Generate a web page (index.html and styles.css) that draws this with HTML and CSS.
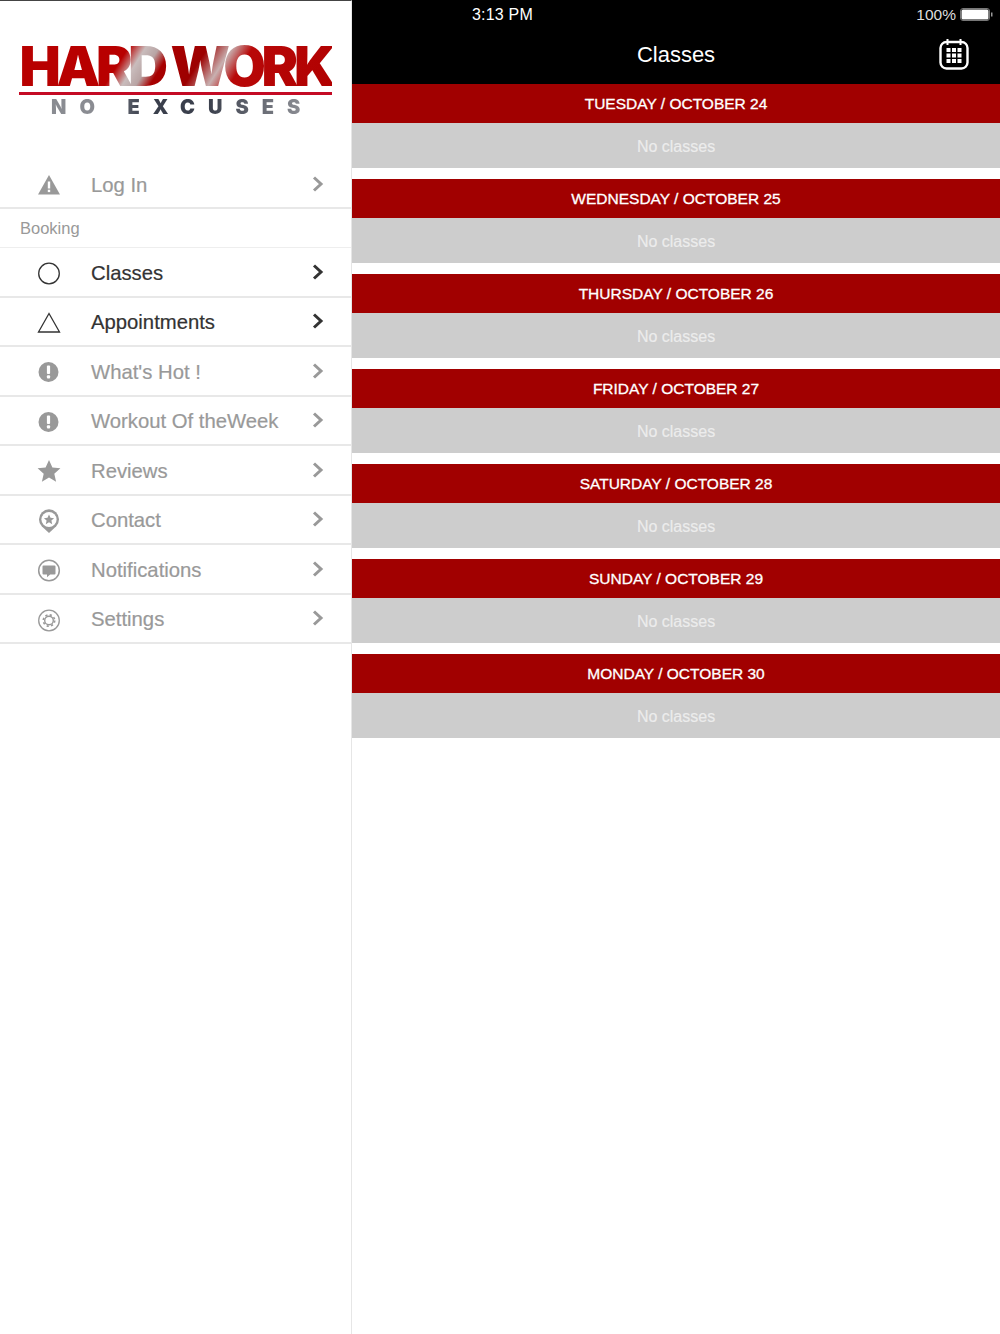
FILE: index.html
```html
<!DOCTYPE html>
<html lang="en">
<head>
  <meta charset="UTF-8">
  <meta name="viewport" content="width=device-width, initial-scale=1.0">
  <title>Classes</title>
  <link rel="stylesheet" href="styles.css">
</head>
<body>
<div class="page">
  <div class="sidebar">
    <div class="logo">
      <div class="logo-title">HARD WORK</div>
      <div class="logo-line"></div>
      <div class="logo-sub">NO EXCUSES</div>
    </div>

    <div class="menu-row login">
      <svg class="menu-icon" viewBox="0 0 24 24"><path d="M12 2 23 21.500H1Z" fill="currentColor"></path><rect x="10.800" y="8.500" width="2.400" height="7" fill="#fff"></rect><rect x="10.800" y="16.700" width="2.400" height="2.400" fill="#fff"></rect></svg>
      <span class="menu-label">Log In</span>
      <svg class="chevron" viewBox="0 0 12 16"><path d="M2 1.500 9 8l-7 6.500" fill="none" stroke="currentColor" stroke-width="3"></path></svg>
    </div>
    <div class="menu-section">Booking</div>
    <div class="menu-row active">
      <svg class="menu-icon" viewBox="0 0 24 24"><circle cx="12" cy="12.500" r="10.300" fill="none" stroke="currentColor" stroke-width="1.300"></circle></svg>
      <span class="menu-label">Classes</span>
      <svg class="chevron" viewBox="0 0 12 16"><path d="M2 1.500 9 8l-7 6.500" fill="none" stroke="currentColor" stroke-width="3"></path></svg>
    </div>
    <div class="menu-row active">
      <svg class="menu-icon" viewBox="0 0 24 24"><path d="M12 2.500 22.500 21H1.500Z" fill="none" stroke="currentColor" stroke-width="1.300"></path></svg>
      <span class="menu-label">Appointments</span>
      <svg class="chevron" viewBox="0 0 12 16"><path d="M2 1.500 9 8l-7 6.500" fill="none" stroke="currentColor" stroke-width="3"></path></svg>
    </div>
    <div class="menu-row">
      <svg class="menu-icon" viewBox="0 0 24 24"><circle cx="11.500" cy="12" r="10" fill="currentColor"></circle><rect x="9.900" y="5.500" width="3.200" height="8.500" rx="1" fill="#fff"></rect><rect x="9.900" y="15.300" width="3.200" height="3.200" rx="1" fill="#fff"></rect></svg>
      <span class="menu-label">What's Hot !</span>
      <svg class="chevron" viewBox="0 0 12 16"><path d="M2 1.500 9 8l-7 6.500" fill="none" stroke="currentColor" stroke-width="3"></path></svg>
    </div>
    <div class="menu-row">
      <svg class="menu-icon" viewBox="0 0 24 24"><circle cx="11.500" cy="12" r="10" fill="currentColor"></circle><rect x="9.900" y="5.500" width="3.200" height="8.500" rx="1" fill="#fff"></rect><rect x="9.900" y="15.300" width="3.200" height="3.200" rx="1" fill="#fff"></rect></svg>
      <span class="menu-label">Workout Of theWeek</span>
      <svg class="chevron" viewBox="0 0 12 16"><path d="M2 1.500 9 8l-7 6.500" fill="none" stroke="currentColor" stroke-width="3"></path></svg>
    </div>
    <div class="menu-row">
      <svg class="menu-icon" viewBox="0 0 24 24"><path d="m12 1 3.400 7.500 8 .8-6.100 5.400 1.800 8-7.100-4.200-7.100 4.200 1.800-8L.6 9.300l8-.8Z" fill="currentColor"></path></svg>
      <span class="menu-label">Reviews</span>
      <svg class="chevron" viewBox="0 0 12 16"><path d="M2 1.500 9 8l-7 6.500" fill="none" stroke="currentColor" stroke-width="3"></path></svg>
    </div>
    <div class="menu-row">
      <svg class="menu-icon" viewBox="0 0 24 24"><path d="M12 24 4.700 17.200a10 10 0 1 1 14.600 0Z" fill="currentColor"></path><circle cx="12" cy="10.500" r="7.600" fill="#fff"></circle><path d="m12 5.500 1.500 3.300 3.600.4-2.700 2.400.8 3.600-3.200-1.900-3.200 1.900.8-3.600-2.700-2.400 3.600-.4Z" fill="currentColor"></path></svg>
      <span class="menu-label">Contact</span>
      <svg class="chevron" viewBox="0 0 12 16"><path d="M2 1.500 9 8l-7 6.500" fill="none" stroke="currentColor" stroke-width="3"></path></svg>
    </div>
    <div class="menu-row">
      <svg class="menu-icon" viewBox="0 0 24 24"><circle cx="12" cy="12.500" r="10.300" fill="none" stroke="currentColor" stroke-width="1.500"></circle><path d="M6.500 7.500h11a1 1 0 0 1 1 1v7a1 1 0 0 1-1 1h-4.300L10 19.300v-2.800H6.500a1 1 0 0 1-1-1v-7a1 1 0 0 1 1-1Z" fill="currentColor"></path></svg>
      <span class="menu-label">Notifications</span>
      <svg class="chevron" viewBox="0 0 12 16"><path d="M2 1.500 9 8l-7 6.500" fill="none" stroke="currentColor" stroke-width="3"></path></svg>
    </div>
    <div class="menu-row">
      <svg class="menu-icon" viewBox="0 0 24 24"><circle cx="12" cy="12.500" r="10.300" fill="none" stroke="currentColor" stroke-width="1.300"></circle><circle cx="12" cy="12.500" r="4.300" fill="none" stroke="currentColor" stroke-width="1.400"></circle><circle cx="12" cy="12.500" r="5.700" fill="none" stroke="currentColor" stroke-width="1.600" stroke-dasharray="2.200 2.280"></circle></svg>
      <span class="menu-label">Settings</span>
      <svg class="chevron" viewBox="0 0 12 16"><path d="M2 1.500 9 8l-7 6.500" fill="none" stroke="currentColor" stroke-width="3"></path></svg>
    </div>
  </div>

  <div class="main">
    <div class="topbar">
      <div class="status">
        <span class="status-time">3:13 PM</span>
        <span class="status-battery">100%
          <svg class="battery" viewBox="0 0 33 13"><rect x=".5" y=".5" width="29" height="12" rx="2.500" fill="none" stroke="#777"></rect><rect x="1.500" y="1.500" width="27" height="10" rx="1.500" fill="#fff"></rect><rect x="31" y="4.500" width="1.500" height="4" fill="#999"></rect></svg>
        </span>
      </div>
      <div class="nav">
        <span class="nav-title">Classes</span>
        <svg class="nav-cal" viewBox="0 0 30 32"><rect x="1.500" y="4" width="27" height="26.500" rx="6" fill="none" stroke="#fff" stroke-width="2.400"></rect><path d="M8.500 1v6M21.500 1v6" stroke="#fff" stroke-width="2"></path><path d="M7.500 10h4v4h-4Zm5.500 0h4v4h-4Zm5.500 0h4v4h-4Zm-11 5.500h4v4h-4Zm5.500 0h4v4h-4Zm5.500 0h4v4h-4ZM7.500 21h4v4h-4Zm5.500 0h4v4h-4Zm5.500 0h4v4h-4Z" fill="#fff"></path></svg>
      </div>
    </div>

    <div class="day">
      <div class="day-head">TUESDAY / OCTOBER 24</div>
      <div class="day-empty">No classes</div>
    </div>
    <div class="day">
      <div class="day-head">WEDNESDAY / OCTOBER 25</div>
      <div class="day-empty">No classes</div>
    </div>
    <div class="day">
      <div class="day-head">THURSDAY / OCTOBER 26</div>
      <div class="day-empty">No classes</div>
    </div>
    <div class="day">
      <div class="day-head">FRIDAY / OCTOBER 27</div>
      <div class="day-empty">No classes</div>
    </div>
    <div class="day">
      <div class="day-head">SATURDAY / OCTOBER 28</div>
      <div class="day-empty">No classes</div>
    </div>
    <div class="day">
      <div class="day-head">SUNDAY / OCTOBER 29</div>
      <div class="day-empty">No classes</div>
    </div>
    <div class="day">
      <div class="day-head">MONDAY / OCTOBER 30</div>
      <div class="day-empty">No classes</div>
    </div>
  </div>
</div>
</body>
</html>
```

FILE: styles.css
```css
:root {
  --red: #a10000;
  --grey: #cdcdcd;
  --muted: #999999;
  --dark: #333333;
  --border: #e8e8e8;
}

* {
  margin: 0;
  padding: 0;
  box-sizing: border-box;
}

html, body {
  height: 100%;
}

body {
  font-family: "Liberation Sans", Arial, sans-serif;
  background-color: #ffffff;
  overflow: hidden;
}

.page {
  display: flex;
  height: 1334px;
}

.sidebar {
  width: 352px;
  flex-shrink: 0;
  border-top: 1px solid #444444;
  border-right: 1px solid #e6e6e6;
}

.logo {
  height: 159px;
  padding: 39px 0 0 19px;
}

.logo-title {
  width: 313px;
  height: 52px;
  font-family: Inter, "Liberation Sans", sans-serif;
  font-size: 55px;
  font-weight: 900;
  line-height: 52px;
  letter-spacing: -4.3px;
  white-space: nowrap;
  text-align: center;
  color: transparent;
  background: linear-gradient(122deg, #b80000 0%, #b80000 33%, #c9bcbc 38%, #b8a4a4 42%, #a80000 46%, #9c0000 56%, #c8b0b0 63%, #b80808 69%, #b00000 100%);
  -webkit-background-clip: text;
  background-clip: text;
}

.logo-line {
  width: 313px;
  height: 3px;
  background-color: #c40a24;
}

.logo-sub {
  width: 313px;
  font-family: Inter, "Liberation Sans", sans-serif;
  font-size: 20px;
  font-weight: 900;
  line-height: 24px;
  letter-spacing: 13px;
  word-spacing: 2.5px;
  white-space: nowrap;
  padding-left: 32px;
  color: transparent;
  background: linear-gradient(90deg, #8a8c92 0%, #8a8c92 25%, #3a3f4c 40%, #3a3f4c 60%, #8a8c92 90%);
  -webkit-background-clip: text;
  background-clip: text;
}

.menu-row {
  display: flex;
  align-items: center;
  height: 49.5px;
  padding: 3px 27px 0 37px;
  border-bottom: 2px solid var(--border);
  color: var(--muted);
}

.menu-row.login {
  height: 49px;
}

.menu-row.active {
  color: var(--dark);
}

.menu-icon {
  width: 24px;
  height: 24px;
  flex-shrink: 0;
  margin-right: 30px;
}

.menu-label {
  flex: 1;
  font-size: 20.3px;
  -webkit-text-stroke: 0.2px currentColor;
  white-space: nowrap;
}

.chevron {
  width: 12px;
  height: 16px;
  margin-top: -3px;
}

.menu-section {
  height: 39px;
  padding-left: 20px;
  border-bottom: 1px solid #eeeeee;
  font-size: 16.5px;
  line-height: 39px;
  color: var(--muted);
}

.main {
  flex: 1;
  min-width: 0;
}

.topbar {
  height: 84px;
  background-color: #000000;
  color: #ffffff;
}

.status {
  display: flex;
  align-items: center;
  justify-content: space-between;
  height: 29px;
  padding: 0 7px 0 120px;
  font-size: 16px;
  letter-spacing: 0.2px;
}

.status-battery {
  display: flex;
  align-items: center;
  gap: 4px;
  font-size: 15.5px;
  letter-spacing: 0;
  color: #dddddd;
}

.battery {
  width: 33px;
  height: 13px;
}

.nav {
  display: flex;
  align-items: center;
  justify-content: center;
  position: relative;
  height: 55px;
  padding-bottom: 3px;
}

.nav-title {
  font-size: 22px;
}

.nav-cal {
  position: absolute;
  right: 31px;
  top: 9px;
  width: 30px;
  height: 32px;
}

.day {
  margin-bottom: 11px;
}

.day-head {
  height: 39px;
  background-color: var(--red);
  color: #ffffff;
  font-size: 15.5px;
  -webkit-text-stroke: 0.3px #ffffff;
  line-height: 40px;
  text-align: center;
}

.day-empty {
  height: 45px;
  background-color: var(--grey);
  color: #ececec;
  font-size: 16px;
  -webkit-text-stroke: 0.2px #ececec;
  line-height: 47px;
  text-align: center;
}
```
